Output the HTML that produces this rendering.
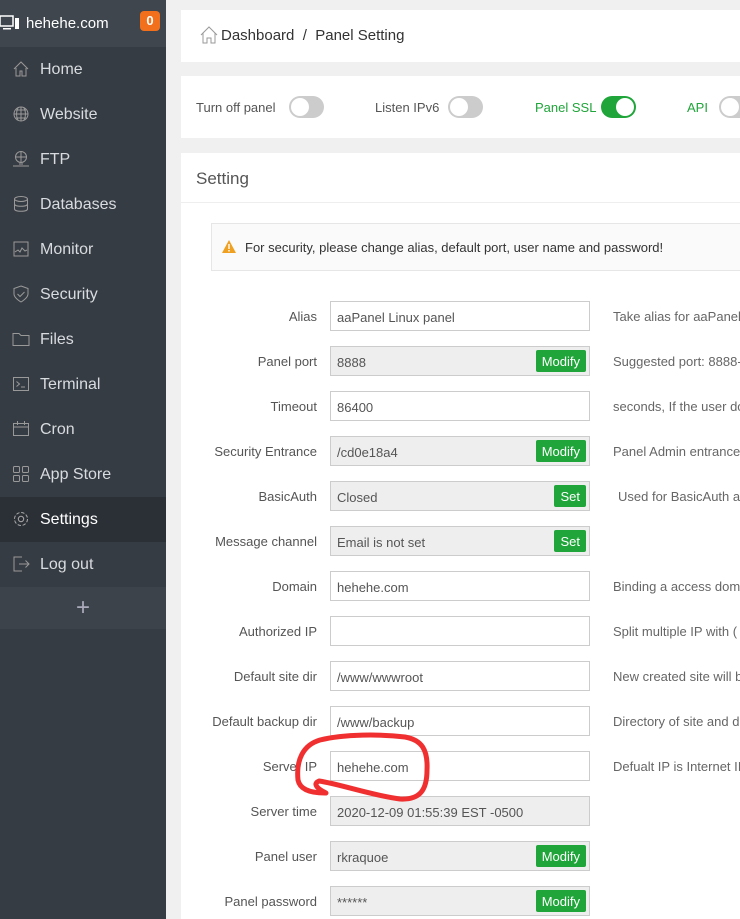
<!DOCTYPE html>
<html><head><meta charset="utf-8"><style>
*{box-sizing:border-box;margin:0;padding:0}
body{width:740px;height:919px;overflow:hidden;background:#f0f0f0;font-family:"Liberation Sans",sans-serif;position:relative}
.sb{position:absolute;left:0;top:0;width:166px;height:919px;background:#363c43}
.sbh{height:47px;background:#3f464e;color:#fff;font-size:15px;display:flex;align-items:center;padding-left:26px;position:relative}
.badge{position:absolute;left:140px;top:11px;width:20px;height:20px;background:#f2701c;border-radius:4px;color:#fff;font-size:13px;font-weight:bold;text-align:center;line-height:20px}
.it{height:45px;display:flex;align-items:center;padding-left:40px;color:#d8dce0;font-size:16px;position:relative}
.it svg{position:absolute;left:12px;top:13px}
.act{background:#2b3036;color:#fff}
.plus{height:42px;background:#3c434b;color:#aab;font-size:24px;text-align:center;line-height:42px}
.card{position:absolute;left:181px;right:0;background:#fff}
.tg{position:absolute;top:96px;width:35px;height:22px;border-radius:11px;background:#ccc}
.tg::after{content:"";position:absolute;left:2px;top:2px;width:18px;height:18px;border-radius:50%;background:#fff}
.tg.on{background:#20a53a}.tg.on::after{left:15px}
.tl{position:absolute;top:100px;font-size:13px;color:#555}
.row{position:absolute;left:181px;width:560px;height:30px}
.lb{position:absolute;right:424px;top:8px;font-size:13px;color:#555;white-space:nowrap}
.in{position:absolute;left:149px;width:260px;height:30px;border:1px solid #ccc;background:#fff;font-size:13px;color:#555;padding:8px 6px 6px}
.in.g{background:#eee}
.btn{position:absolute;right:3px;top:3px;height:22px;background:#20a53a;color:#fff;font-size:13px;padding:4px 6px 3px;border-radius:2px}
.ds{position:absolute;left:432px;top:8px;font-size:13px;color:#666;white-space:nowrap}
</style></head><body>
<div class="sb">
 <div class="sbh"><svg style="position:absolute;left:0;top:15px" width="20" height="16"><rect x="0" y="1" width="13" height="10" fill="none" stroke="#fff" stroke-width="1.5"/><rect x="15" y="3" width="4" height="11" fill="#fff"/><rect x="3" y="13" width="8" height="1.5" fill="#fff"/></svg>hehehe.com<div class="badge">0</div></div>
 <div class="it"><svg width="18" height="18" fill="none" stroke="#999"><path d="M2 9L9 2l7 7M4 8v8h4v-5h2v5h4V8"/></svg>Home</div>
 <div class="it"><svg width="18" height="18" fill="none" stroke="#999"><circle cx="9" cy="9" r="7"/><path d="M2 9h14M9 2v14M4 5h10M4 13h10M6 3c-2 4-2 8 0 12M12 3c2 4 2 8 0 12"/></svg>Website</div>
 <div class="it"><svg width="18" height="18" fill="none" stroke="#999"><circle cx="9" cy="7" r="5.5"/><path d="M3.5 7h11M9 1.5v11M1 16h16M7 14h4"/></svg>FTP</div>
 <div class="it"><svg width="18" height="18" fill="none" stroke="#999"><ellipse cx="9" cy="4" rx="6.5" ry="2.5"/><path d="M2.5 4v10c0 3 13 3 13 0V4M2.5 9c0 3 13 3 13 0"/></svg>Databases</div>
 <div class="it"><svg width="18" height="18" fill="none" stroke="#999"><rect x="2" y="2" width="14" height="14"/><path d="M3 12l3-2 2 2 2-4 3 3 2-1"/></svg>Monitor</div>
 <div class="it"><svg width="18" height="18" fill="none" stroke="#999"><path d="M9 1l7 2.5v5.5c0 4-7 8-7 8S2 13 2 9V3.5z"/><path d="M5.5 9l2.5 2.5 4.5-4.5"/></svg>Security</div>
 <div class="it"><svg width="18" height="18" fill="none" stroke="#999"><path d="M1 3.5h6l2 2h8v10H1z"/></svg>Files</div>
 <div class="it"><svg width="18" height="18" fill="none" stroke="#999"><rect x="1.5" y="2.5" width="15" height="13"/><path d="M4.5 6.5l3 2.5-3 2.5M9 12h4"/></svg>Terminal</div>
 <div class="it"><svg width="18" height="18" fill="none" stroke="#999"><rect x="1.5" y="3.5" width="15" height="12"/><path d="M1.5 7h15M5.5 1v4M12.5 1v4"/></svg>Cron</div>
 <div class="it"><svg width="18" height="18" fill="none" stroke="#999"><rect x="1.5" y="1.5" width="6" height="6" rx="1"/><rect x="10.5" y="1.5" width="6" height="6" rx="1"/><rect x="1.5" y="10.5" width="6" height="6" rx="1"/><rect x="10.5" y="10.5" width="6" height="6" rx="1"/></svg>App Store</div>
 <div class="it act"><svg width="18" height="18" fill="none" stroke="#aaa"><circle cx="9" cy="9" r="2.7"/><circle cx="9" cy="9" r="6.5" stroke-dasharray="3.4 1.7"/></svg>Settings</div>
 <div class="it"><svg width="18" height="18" fill="none" stroke="#999"><path d="M10 2H2v14h8M7 9h10M13.5 5.5L17 9l-3.5 3.5"/></svg>Log out</div>
 <div class="plus">+</div>
</div>
<div class="card" style="top:10px;height:52px"><svg style="position:absolute;left:19px;top:16px" width="18" height="18" fill="none" stroke="#999"><path d="M1 9L9 1l8 8M3 7v10h4v-5h4v5h4V7"/></svg><span style="position:absolute;left:40px;top:17px;font-size:15px;color:#333">Dashboard &nbsp;/&nbsp; Panel Setting</span></div>
<div class="card" style="top:76px;height:62px"></div>
<span class="tl" style="left:196px">Turn off panel</span><div class="tg" style="left:289px"></div>
<span class="tl" style="left:375px">Listen IPv6</span><div class="tg" style="left:448px"></div>
<span class="tl" style="left:535px;color:#20a53a">Panel SSL</span><div class="tg on" style="left:601px"></div>
<span class="tl" style="left:687px;color:#20a53a">API</span><div class="tg" style="left:719px"></div>
<div class="card" style="top:153px;height:766px">
 <div style="height:50px;border-bottom:1px solid #eee;font-size:17px;color:#555;padding:16px 15px">Setting</div>
 <div style="position:absolute;left:30px;top:70px;right:0;height:48px;border:1px solid #e6e6e6;border-right:none;background:#fafafa;font-size:13px;color:#333;padding:16px 0 0 33px"><svg style="position:absolute;left:10px;top:16px" width="14" height="13"><path d="M7 0L14 13H0z" fill="#f0a020"/><rect x="6.3" y="4" width="1.4" height="5" fill="#fff"/><rect x="6.3" y="10" width="1.4" height="1.5" fill="#fff"/></svg>For security, please change alias, default port, user name and password!</div>
</div>
<div class="row" style="top:301px"><span class="lb">Alias</span><div class="in">aaPanel Linux panel</div><span class="ds">Take alias for aaPanel</span></div>
<div class="row" style="top:346px"><span class="lb">Panel port</span><div class="in g">8888<span class="btn">Modify</span></div><span class="ds">Suggested port: 8888-</span></div>
<div class="row" style="top:391px"><span class="lb">Timeout</span><div class="in">86400</div><span class="ds">seconds, If the user do</span></div>
<div class="row" style="top:436px"><span class="lb">Security Entrance</span><div class="in g">/cd0e18a4<span class="btn">Modify</span></div><span class="ds">Panel Admin entrance</span></div>
<div class="row" style="top:481px"><span class="lb">BasicAuth</span><div class="in g">Closed<span class="btn">Set</span></div><span class="ds" style="left:437px">Used for BasicAuth au</span></div>
<div class="row" style="top:526px"><span class="lb">Message channel</span><div class="in g">Email is not set<span class="btn">Set</span></div></div>
<div class="row" style="top:571px"><span class="lb">Domain</span><div class="in">hehehe.com</div><span class="ds">Binding a access doma</span></div>
<div class="row" style="top:616px"><span class="lb">Authorized IP</span><div class="in"></div><span class="ds">Split multiple IP with (</span></div>
<div class="row" style="top:661px"><span class="lb">Default site dir</span><div class="in">/www/wwwroot</div><span class="ds">New created site will b</span></div>
<div class="row" style="top:706px"><span class="lb">Default backup dir</span><div class="in">/www/backup</div><span class="ds">Directory of site and d</span></div>
<div class="row" style="top:751px"><span class="lb">Server IP</span><div class="in">hehehe.com</div><span class="ds">Defualt IP is Internet II</span></div>
<div class="row" style="top:796px"><span class="lb">Server time</span><div class="in g">2020-12-09 01:55:39 EST -0500</div></div>
<div class="row" style="top:841px"><span class="lb">Panel user</span><div class="in g">rkraquoe<span class="btn">Modify</span></div></div>
<div class="row" style="top:886px"><span class="lb">Panel password</span><div class="in g">******<span class="btn">Modify</span></div></div>
<svg style="position:absolute;left:0;top:0" width="740" height="919"><path d="M326 793C318 789 312 784 319 781C340 784 370 795 400 799C420 800 427 790 427 770C428 750 422 740 405 737C380 734 345 734 320 740C303 745 296 760 298 780C300 790 312 793 325 793" fill="none" stroke="#f03030" stroke-width="5" stroke-linecap="round" stroke-linejoin="round"/></svg>
</body></html>
